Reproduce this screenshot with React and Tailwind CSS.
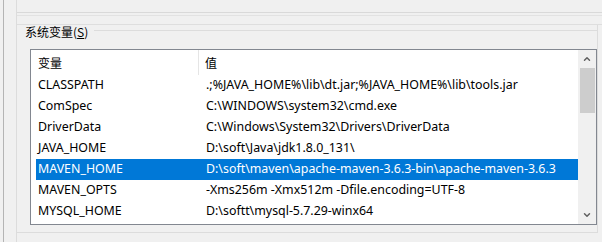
import { ChevronUp, ChevronDown } from 'lucide-react';

const rows = [
    { name: 'CLASSPATH', value: '.;%JAVA_HOME%\\lib\\dt.jar;%JAVA_HOME%\\lib\\tools.jar' },
    { name: 'ComSpec', value: 'C:\\WINDOWS\\system32\\cmd.exe' },
    { name: 'DriverData', value: 'C:\\Windows\\System32\\Drivers\\DriverData' },
    { name: 'JAVA_HOME', value: 'D:\\soft\\Java\\jdk1.8.0_131\\' },
    { name: 'MAVEN_HOME', value: 'D:\\soft\\maven\\apache-maven-3.6.3-bin\\apache-maven-3.6.3', selected: true },
    { name: 'MAVEN_OPTS', value: '-Xms256m -Xmx512m -Dfile.encoding=UTF-8' },
    { name: 'MYSQL_HOME', value: 'D:\\softt\\mysql-5.7.29-winx64' },
];

export default function App() {
    return (
        <div className="w-[602px] h-[242px] bg-[#f0f0f0] pl-[3px] overflow-hidden text-[12.4px] text-black font-['Noto_Sans','Noto_Sans_CJK_SC',sans-serif]">
            <div className="h-full border-l border-[#b4b4b4] pl-[12px]">
                <div className="h-full border-l border-[#dcdcdc] flex flex-col">
                    {/* lines of the group above */}
                    <div className="h-[13px] border-b border-[#d9d9d9] shrink-0" />
                    <div className="h-[3px] border-b border-[#e2e2e2] shrink-0" />
                    <div className="h-[9px] border-b border-[#dedede] shrink-0" />

                    {/* 系统变量 group */}
                    <div className="flex-1 flex flex-col mr-[4px] border-r border-b border-[#dcdcdc] mb-[9px]">
                        <div className="flex items-center h-[14px] pl-[8px]">
                            <span className="leading-none font-['Noto_Sans_CJK_SC',sans-serif] text-[12px]">系统变量(<span className="underline underline-offset-1">S</span>)</span>
                            <div className="flex-1 h-px bg-[#dcdcdc] ml-[6px] mt-[-4px]" />
                        </div>
                        <div className="pl-[13px] pt-[10px]">
                            <div className="w-[567px] h-[176px] border border-[#828790] bg-white flex">
                                <div className="flex-1 flex flex-col">
                                    <div className="h-[25px] flex items-stretch shrink-0">
                                        <div className="w-[168px] pl-[7px] flex items-center border-r border-[#e5e5e5] font-['Noto_Sans_CJK_SC',sans-serif] text-[12px]">变量</div>
                                        <div className="pl-[6px] flex items-center font-['Noto_Sans_CJK_SC',sans-serif] text-[12px]">值</div>
                                    </div>
                                    {rows.map((row) => (
                                        <div key={row.name} className="pl-[5px] h-[21px] shrink-0">
                                            <div className={`h-full flex items-center pl-[2px] ${row.selected ? 'bg-[#0078d7] text-white' : ''}`}>
                                                <div className="w-[168px] whitespace-nowrap">{row.name}</div>
                                                <div className="whitespace-nowrap">{row.value}</div>
                                            </div>
                                        </div>
                                    ))}
                                </div>
                                <div className="w-[18px] bg-[#f0f0f0] flex flex-col items-center">
                                    <div className="h-[18px] w-full flex items-center justify-center">
                                        <ChevronUp className="w-[10px] h-[10px] text-[#606060]" strokeWidth={3.5} />
                                    </div>
                                    <div className="w-[15px] h-[45px] bg-[#cdcdcd]" />
                                    <div className="flex-1" />
                                    <div className="h-[18px] w-full flex items-center justify-center">
                                        <ChevronDown className="w-[10px] h-[10px] text-[#606060]" strokeWidth={3.5} />
                                    </div>
                                </div>
                            </div>
                        </div>
                    </div>
                </div>
            </div>
        </div>
    );
}
